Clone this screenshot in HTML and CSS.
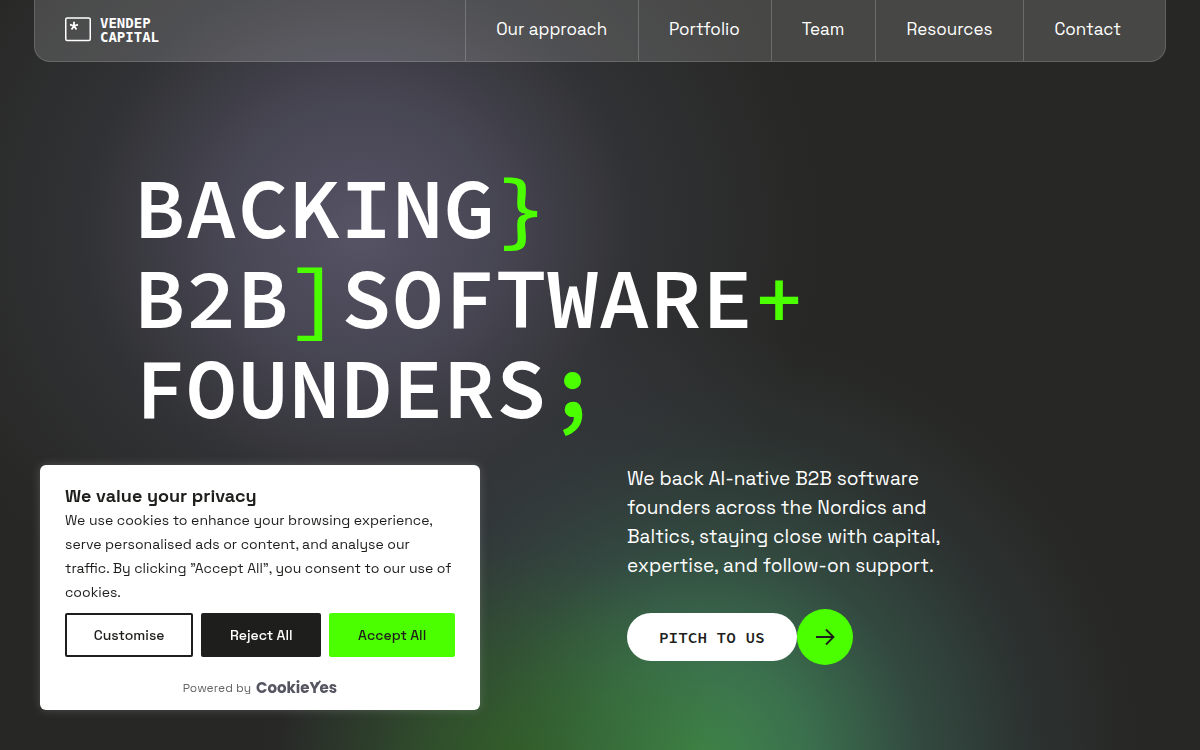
FILE: index.html
```
<!DOCTYPE html>
<html lang="en">
<head>
    <meta charset="utf-8">
    <meta name="viewport" content="width=device-width, initial-scale=1">
    <meta name="description" content="We back AI-native B2B software founders across the Nordics and Baltics." />
    <title>Vendep Capital</title>
    <link rel="stylesheet" href="styles.css">
</head>
<body>
    <!-- header -->
    <header class="header">
        <a href="#" class="logo">
            <svg class="logo-mark" width="26" height="25" viewBox="0 0 26 25" fill="none" stroke="#fff">
                <rect x="0.75" y="1" width="24.5" height="22.5" rx="1.5" stroke-width="1.5" />
                <path d="M9 4.8V9M9 9L5 7.7M9 9l4-1.3M9 9l-2.5 3.6M9 9l2.5 3.6" stroke-width="1.8" />
            </svg>
            <span>VENDEP<br>CAPITAL</span>
        </a>
        <nav class="nav">
            <a href="#">Our approach</a>
            <a href="#">Portfolio</a>
            <a href="#">Team</a>
            <a href="#">Resources</a>
            <a href="#">Contact</a>
        </nav>
    </header>

    <!-- hero -->
    <main class="hero">
        <div class="hero-inner">
            <h1>BACKING<b>}</b><br>B2B<b>]</b>SOFTWARE<b>+</b><br>FOUNDERS<b>;</b></h1>
            <div class="intro">
                <p>We back AI-native B2B software<br>founders across the Nordics and<br>Baltics, staying close with capital,<br>expertise, and follow-on support.</p>
                <a href="#" class="pitch">
                    <span class="pitch-text">PITCH TO US</span>
                    <span class="pitch-arrow">
                        <svg width="20" height="18" viewBox="0 0 20 18" fill="none" stroke="#1e1e1c" stroke-width="1.8">
                            <path d="M1 9h17.5M11 1.5L18.5 9L11 16.5" />
                        </svg>
                    </span>
                </a>
            </div>
        </div>
    </main>

    <!-- cookie banner -->
    <section class="cookie" aria-label="We value your privacy">
        <h2>We value your privacy</h2>
        <p>We use cookies to enhance your browsing experience, serve personalised ads or content, and analyse our traffic. By clicking ”Accept All”, you consent to our use of cookies.</p>
        <div class="cookie-btns">
            <button type="button" class="customise">Customise</button>
            <button type="button" class="reject">Reject All</button>
            <button type="button" class="accept">Accept All</button>
        </div>
        <div class="powered">Powered by <a href="#">CookieYes</a></div>
    </section>
</body>
</html>
```
FILE: styles.css
```
* {
    margin: 0;
    padding: 0;
    box-sizing: border-box;
}
body {
    min-height: 100vh;
    font-family: "Space Grotesk", Inter, sans-serif;
    color: #fff;
    background:
        radial-gradient(460px 430px at 360px 230px, rgba(91, 88, 108, 0.9), rgba(82, 80, 98, 0.75) 30%, rgba(64, 66, 76, 0.4) 60%, transparent),
        radial-gradient(230px 220px at 510px 770px, rgba(48, 98, 24, 0.65), transparent),
        radial-gradient(440px 430px at 700px 760px, #3f8549, rgba(62, 124, 84, 0.85) 25%, rgba(58, 96, 82, 0.6) 50%, rgba(56, 76, 76, 0.3) 75%, transparent),
        #272725;
}
a {
    color: inherit;
    text-decoration: none;
}
.header {
    display: flex;
    justify-content: space-between;
    height: 62px;
    margin: 0 34px;
    background: rgba(255, 255, 255, 0.15);
    border: 1px solid rgba(255, 255, 255, 0.15);
    border-top: 0;
    border-radius: 0 0 16px 16px;
}
.logo {
    display: flex;
    align-items: center;
    gap: 9px;
    margin-left: 30px;
    padding-bottom: 2px;
    font: bold 14px/14px "DejaVu Sans Mono", monospace;
}
.nav {
    display: flex;
    padding-right: 13px;
    font-size: 17px;
}
.nav a {
    padding: 0 31px 0 30px;
    line-height: 58px;
    border-left: 1px solid rgba(255, 255, 255, 0.2);
}
.hero-inner {
    max-width: 932px;
    margin: 0 auto;
    padding-top: 100px;
}
h1 {
    font: 600 86px/90px "Source Code Pro", "Liberation Mono", monospace;
    white-space: nowrap;
}
h1 b {
    font-weight: 600;
    color: #4bff00;
}
.intro {
    margin: 32px 0 0 493px;
}
.intro p {
    font-size: 19px;
    line-height: 29px;
    white-space: nowrap;
}
.pitch {
    display: inline-flex;
    align-items: center;
    margin-top: 29px;
    color: #1e1e1c;
}
.pitch-text {
    padding: 0 32px;
    border-radius: 24px;
    background: #fff;
    font: 600 16px/48px "Source Code Pro", "Liberation Mono", monospace;
}
.pitch-arrow {
    display: flex;
    align-items: center;
    justify-content: center;
    width: 56px;
    height: 56px;
    border-radius: 50%;
    background: #4bff00;
}
.cookie {
    position: fixed;
    left: 40px;
    bottom: 40px;
    width: 440px;
    padding: 18px 25px 10px;
    border-radius: 6px;
    background: #fff;
    color: #1e1e1c;
    box-shadow: 0 0 10px rgba(172, 171, 171, 0.3);
}
.cookie h2 {
    font-size: 18px;
    line-height: 25px;
}
.cookie p {
    font-size: 14px;
    line-height: 24px;
}
.cookie-btns {
    display: flex;
    gap: 8px;
    margin-top: 9px;
}
.cookie button {
    flex: auto;
    height: 44px;
    border: 2px solid #1e1e1c;
    border-radius: 2px;
    font: 500 14px/24px "Space Grotesk", Inter, sans-serif;
    cursor: pointer;
}
.cookie .customise {
    background: #fff;
    color: #1e1e1c;
}
.cookie .reject {
    background: #1e1e1c;
    color: #fff;
}
.cookie .accept {
    border-color: #4bff00;
    background: #4bff00;
    color: #1e1e1c;
}
.powered {
    display: flex;
    align-items: center;
    justify-content: center;
    gap: 5px;
    margin-top: 19px;
    font-size: 12px;
    line-height: 24px;
    color: #666;
}
.powered a {
    position: relative;
    font-family: Poppins, "Space Grotesk", Inter, sans-serif;
    font-size: 15px;
    font-weight: 700;
    color: #565662;
}
/* long arm of the tick in the Y */
.powered a::after {
    content: "";
    position: absolute;
    top: 4px;
    right: 18px;
    width: 2px;
    height: 8px;
    background: #565662;
    transform: rotate(35deg);
}
```
